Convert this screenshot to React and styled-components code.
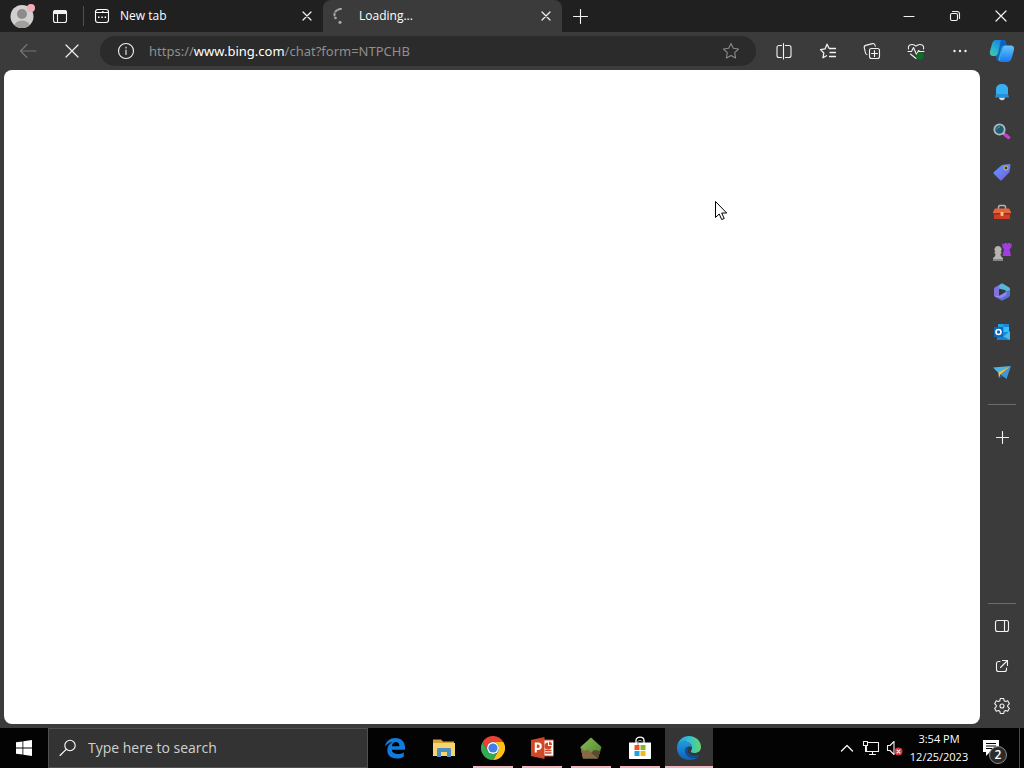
import { useState } from "react";
import styled, { createGlobalStyle } from "styled-components";

const GlobalStyle = createGlobalStyle`
  *,
  *::before,
  *::after {
    box-sizing: border-box;
  }

  :root {
    --frame: #3b3b3b;
    --titlebar: #202020;
    --field: #2b2b2b;
    --accent: #f0b4bc;
    --ui-font: "Open Sans", "Noto Sans", sans-serif;
  }

  body {
    margin: 0;
    font-family: var(--ui-font);
    color: #fff;
    background-color: var(--frame);
  }

  button,
  input {
    font-family: inherit;
  }
`;

export default function App() {
  return (
    <>
      <GlobalStyle />
      <Desktop>
        <TitleBar />
        <Toolbar />
        <Browser>
          <WebPage>
            <Cursor />
          </WebPage>
          <Sidebar />
        </Browser>
        <Taskbar />
      </Desktop>
    </>
  );
}

function TitleBar() {
  return (
    <TitleBarRow>
      <IconButton $width="44px" aria-label="Profile">
        <ProfileIcon />
      </IconButton>
      <IconButton $width="32px" aria-label="Tab actions menu">
        <TabActionsIcon />
      </IconButton>
      <TitleDivider />
      <Tab>
        <NewTabIcon />
        <TabTitle>New tab</TabTitle>
        <CloseTab aria-label="Close New tab">
          <CrossIcon size={10} />
        </CloseTab>
      </Tab>
      <Tab $active>
        <SpinnerIcon />
        <TabTitle>Loading...</TabTitle>
        <CloseTab aria-label="Close Loading">
          <CrossIcon size={10} />
        </CloseTab>
      </Tab>
      <IconButton $width="36px" aria-label="New tab">
        <PlusIcon size={15} />
      </IconButton>
      <WindowControls>
        <IconButton $width="46px" aria-label="Minimize">
          <Line width="12" height="12" viewBox="0 0 12 12">
            <path d="M1 6.500h10" />
          </Line>
        </IconButton>
        <IconButton $width="46px" aria-label="Restore">
          <Line width="12" height="12" viewBox="0 0 12 12">
            <rect x="1.500" y="3.500" width="7" height="7" rx="1.500" />
            <path d="M3.500 1.500h4.500a2.500 2.500 0 0 1 2.500 2.500v4.500" />
          </Line>
        </IconButton>
        <IconButton $width="46px" aria-label="Close window">
          <CrossIcon size={12} />
        </IconButton>
      </WindowControls>
    </TitleBarRow>
  );
}

function Toolbar() {
  return (
    <ToolbarRow>
      <NavButtons>
        <IconButton $width="44px" $color="#757575" aria-label="Back">
          <Line width="18" height="16" viewBox="0 0 18 16">
            <path d="M17 8H1.500M8 1.500 1.500 8 8 14.500" />
          </Line>
        </IconButton>
        <IconButton $width="44px" aria-label="Stop loading">
          <CrossIcon size={14} />
        </IconButton>
      </NavButtons>
      <AddressBar />
      <ToolbarActions>
        <IconButton $width="44px" aria-label="Split screen">
          <Line width="18" height="18" viewBox="0 0 18 18">
            <path d="M6.500 3.500H4a2 2 0 0 0-2 2v8a2 2 0 0 0 2 2h2.500M10.500 3.500H14a2 2 0 0 1 2 2v8a2 2 0 0 1-2 2h-3.500M8.500 1.500v15.500" />
          </Line>
        </IconButton>
        <IconButton $width="44px" aria-label="Favorites">
          <Line width="18" height="18" viewBox="0 0 18 18" $weight="1.3">
            <path d="M7.500 13.700 4 15.800l.8-4.800L1.500 7.600l4.500-.7 2-4.700 2.200 4.300h6.300M11 10.500h5.500M10.500 14.500h6" />
          </Line>
        </IconButton>
        <IconButton $width="44px" aria-label="Collections">
          <Line width="18" height="18" viewBox="0 0 18 18">
            <rect x="6.500" y="6.500" width="10" height="10" rx="2" />
            <path d="M11.500 8.500v6M8.500 11.500h6M4 12.500a2 2 0 0 1-1.500-1.500L1.300 5.800a2 2 0 0 1 1.400-2.400l6.800-1.800a2 2 0 0 1 2.400 1.300l.4 1.300" />
          </Line>
        </IconButton>
        <IconButton $width="44px" aria-label="Browser essentials">
          <Line width="18" height="18" viewBox="0 0 18 18">
            <path d="M1.500 7C.5 3 5.500.8 9 4.200c3.500-3.400 8.500-1.200 7.500 2.800M1 9.500h3.500l2-4 3 7 2-4 1 1H17M3.500 12 9 16.500" />
            <circle cx="13" cy="14" r="3.800" fill="#0e6e24" stroke="none" />
          </Line>
        </IconButton>
        <IconButton $width="44px" aria-label="Settings and more">
          <svg width="16" height="16" viewBox="0 0 16 16" fill="currentColor">
            <circle cx="2.500" cy="8" r="1.200" />
            <circle cx="8" cy="8" r="1.200" />
            <circle cx="13.500" cy="8" r="1.200" />
          </svg>
        </IconButton>
        <IconButton $width="40px" aria-label="Copilot">
          <CopilotIcon />
        </IconButton>
      </ToolbarActions>
    </ToolbarRow>
  );
}

function AddressBar() {
  const [editing, setEditing] = useState(false);
  const [url, setUrl] = useState("https://www.bing.com/chat?form=NTPCHB");
  const [, scheme, host, path] = url.match(/^(\w+:\/\/)?([^/]*)(.*)$/);

  return (
    <AddressField>
      <InlineButton aria-label="View site information">
        <Line width="18" height="18" viewBox="0 0 18 18">
          <circle cx="9" cy="9" r="7.500" />
          <path d="M9 8v4.500M9 5v1" />
        </Line>
      </InlineButton>
      <AddressText>
        <AddressInput
          aria-label="Address and search bar"
          value={editing ? url : ""}
          onFocus={() => setEditing(true)}
          onBlur={() => setEditing(false)}
          onChange={(event) => setUrl(event.target.value)}
        />
        {!editing && (
          <FormattedUrl>
            {scheme}
            <Host>{host}</Host>
            {path}
          </FormattedUrl>
        )}
      </AddressText>
      <InlineButton $color="#8a8a8a" aria-label="Add to favorites">
        <Line width="18" height="18" viewBox="0 0 18 18">
          <path d="m9 1.500 2.300 4.800 5.200.7-3.800 3.700.9 5.300L9 13.500 4.400 16l.9-5.300L1.500 7l5.200-.7z" />
        </Line>
      </InlineButton>
    </AddressField>
  );
}

const sidebarApps = [
  { label: "Notifications", Icon: BellIcon },
  { label: "Search", Icon: MagnifierIcon },
  { label: "Shopping", Icon: TagIcon },
  { label: "Tools", Icon: ToolboxIcon },
  { label: "Games", Icon: ChessIcon },
  { label: "Microsoft 365", Icon: OfficeIcon },
  { label: "Outlook", Icon: OutlookIcon },
  { label: "Drop", Icon: DropIcon },
];

function Sidebar() {
  return (
    <SidebarColumn>
      {sidebarApps.map(({ label, Icon }) => (
        <SidebarButton key={label} aria-label={label}>
          <Icon />
        </SidebarButton>
      ))}
      <SidebarDivider $space="12px" />
      <SidebarButton aria-label="Customize sidebar">
        <PlusIcon size={13} />
      </SidebarButton>
      <SidebarFooter>
        <SidebarDivider $space="2px" />
        <SidebarButton aria-label="Hide sidebar">
          <Line width="16" height="16" viewBox="0 0 16 16">
            <rect x="1.500" y="2.500" width="13" height="11" rx="2" />
            <path d="M10.500 2.500v11" />
          </Line>
        </SidebarButton>
        <SidebarButton aria-label="Open link externally">
          <Line width="16" height="16" viewBox="0 0 16 16">
            <path d="M6 3.500H4.500a2 2 0 0 0-2 2v6a2 2 0 0 0 2 2h6a2 2 0 0 0 2-2V10M8.500 2.500h5v5M13.500 2.500 6.500 9.500" />
          </Line>
        </SidebarButton>
        <SidebarButton aria-label="Settings">
          <Line width="18" height="18" viewBox="0 0 18 18">
            <path d="M7.300 1.500h3.400l.5 2.300 1.300.7 2.200-.7 1.700 2.900-1.700 1.600v1.400l1.700 1.600-1.700 2.900-2.200-.7-1.300.7-.5 2.300H7.300l-.5-2.300-1.300-.7-2.200.7-1.700-2.900 1.700-1.600V8.300L1.600 6.700l1.700-2.900 2.200.7 1.300-.7z" />
            <circle cx="9" cy="9" r="2" />
          </Line>
        </SidebarButton>
      </SidebarFooter>
    </SidebarColumn>
  );
}

const taskbarApps = [
  { label: "Microsoft Edge Legacy", Icon: LegacyEdgeIcon },
  { label: "File Explorer", Icon: ExplorerIcon },
  { label: "Google Chrome", Icon: ChromeIcon, running: true },
  { label: "PowerPoint", Icon: PowerPointIcon, running: true },
  { label: "Game launcher", Icon: PentagonIcon, running: true },
  { label: "Microsoft Store", Icon: StoreIcon, running: true },
  { label: "Microsoft Edge", Icon: EdgeIcon, running: true, active: true },
];

function Taskbar() {
  return (
    <TaskbarRow>
      <IconButton $width="48px" aria-label="Start">
        <svg width="16" height="16" viewBox="0 0 16 16" fill="#fff">
          <path d="M0 2.300 6.500 1.400v6.200H0zM7.300 1.300 16 0v7.600H7.300zM0 8.400h6.500v6.200L0 13.700zM7.300 8.400H16V16l-8.700-1.300z" />
        </svg>
      </IconButton>
      <TaskbarSearch>
        <Line width="18" height="18" viewBox="0 0 18 18">
          <circle cx="11" cy="6.500" r="5.200" />
          <path d="M7.200 10.300 1 16.500" />
        </Line>
        <SearchInput
          type="text"
          aria-label="Type here to search"
          placeholder="Type here to search"
        />
      </TaskbarSearch>
      <TaskbarApps>
        {taskbarApps.map(({ label, Icon, running, active }) => (
          <TaskbarButton
            key={label}
            aria-label={label}
            $running={running}
            $active={active}
          >
            <Icon />
          </TaskbarButton>
        ))}
      </TaskbarApps>
      <Tray>
        <IconButton $width="24px" aria-label="Show hidden icons">
          <Line width="14" height="14" viewBox="0 0 14 14" $weight="1.4">
            <path d="m1.500 10 5.500-5.500 5.500 5.500" />
          </Line>
        </IconButton>
        <IconButton $width="24px" aria-label="Network">
          <Line width="18" height="16" viewBox="0 0 18 16">
            <path d="M6 2.500h10.500v9H4.500V6.500M10.500 11.500v3M7.500 14.500h6" />
            <path d="M1.500 1.500h4v4h-4zM3.500 5.500v6" />
          </Line>
        </IconButton>
        <IconButton $width="24px" aria-label="Volume, muted">
          <Line width="18" height="16" viewBox="0 0 18 16">
            <path d="M1.500 5.500H4l4-4v13l-4-4H1.500z" />
            <circle cx="12.500" cy="11.500" r="4" fill="#d13440" stroke="none" />
            <path d="m11 10 3 3M14 10l-3 3" />
          </Line>
        </IconButton>
        <Clock>
          <span>3:54 PM</span>
          <span>12/25/2023</span>
        </Clock>
        <NotificationButton aria-label="2 new notifications">
          <svg width="18" height="18" viewBox="0 0 18 18">
            <path d="M1 1h16v12H8l-4 4v-4H1z" fill="#fff" />
            <path d="M4 4.500h10M4 7h10M4 9.500h6" stroke="#000" />
          </svg>
          <Badge>2</Badge>
        </NotificationButton>
        <ShowDesktop aria-label="Show desktop" />
      </Tray>
    </TaskbarRow>
  );
}

function CrossIcon({ size }) {
  return (
    <Line width={size} height={size} viewBox={`0 0 ${size} ${size}`} $weight="1.2">
      <path d={`M1 1 ${size - 1} ${size - 1}M${size - 1} 1 1 ${size - 1}`} />
    </Line>
  );
}

function PlusIcon({ size }) {
  const middle = size / 2;
  return (
    <Line width={size} height={size} viewBox={`0 0 ${size} ${size}`}>
      <path d={`M${middle} 0.500v${size - 1}M0.500 ${middle}h${size - 1}`} />
    </Line>
  );
}

function ProfileIcon() {
  return (
    <svg width="26" height="26" viewBox="0 0 26 26">
      <defs>
        <clipPath id="face">
          <circle cx="13" cy="13.500" r="11.500" />
        </clipPath>
      </defs>
      <g clipPath="url(#face)">
        <path d="M0 0h26v26H0z" fill="#d2d0ce" />
        <ellipse cx="13" cy="23.500" rx="8" ry="6" fill="#a19f9d" />
        <circle cx="13" cy="11" r="6" fill="#d2d0ce" />
        <circle cx="13" cy="11" r="5" fill="#8e8c8a" />
      </g>
      <circle cx="22" cy="5" r="4" fill="#f4acb8" />
    </svg>
  );
}

function TabActionsIcon() {
  return (
    <Line width="16" height="16" viewBox="0 0 16 16">
      <rect x="1.500" y="2.500" width="13" height="12" rx="2" />
      <path d="M5.500 5v9.500" />
      <path d="M1.500 5.500v-1a2 2 0 0 1 2-2h9a2 2 0 0 1 2 2v1z" fill="currentColor" />
    </Line>
  );
}

function NewTabIcon() {
  return (
    <Line width="16" height="16" viewBox="0 0 16 16">
      <rect x="1.500" y="1.500" width="13" height="13" rx="2.500" />
      <path d="M1.500 4.500H8l1-1M9 4.500h5.500" />
      <path d="M4 8.500h1.500v1.500H4zM7.300 8.500h1.500v1.500H7.300zM10.600 8.500h1.500v1.500h-1.500z" fill="currentColor" stroke="none" />
    </Line>
  );
}

function SpinnerIcon() {
  return (
    <svg width="16" height="16" viewBox="0 0 16 16" fill="#a6a6a6">
      <path d="M5.500 1.500 8 .8M2.500 3.500 4 2.300M1.500 5.500v2" fill="none" stroke="#a6a6a6" strokeWidth="2" strokeLinecap="round" />
      <circle cx="2.500" cy="10" r="1.300" />
      <circle cx="7" cy="14.300" r="1.600" />
    </svg>
  );
}

function CopilotIcon() {
  return (
    <svg width="26" height="24" viewBox="0 0 26 24">
      <defs>
        <linearGradient id="copilotLeft" x1="0" y1="1" x2="0.600" y2="0">
          <stop offset="0" stopColor="#5ec98a" />
          <stop offset="0.500" stopColor="#2cb8c8" />
          <stop offset="1" stopColor="#1583e0" />
        </linearGradient>
        <linearGradient id="copilotRight" x1="0" y1="0" x2="0" y2="1">
          <stop offset="0" stopColor="#62c6ff" />
          <stop offset="1" stopColor="#1678f0" />
        </linearGradient>
      </defs>
      <path d="M7 1h7c2.500 0 3 1.500 3.500 5.500l-6 16C8 22 8.500 17 6.500 17H4c-3 0-3.500-2.500-3-5L3 5c.7-2.800 2-4 4-4z" fill="url(#copilotLeft)" />
      <path d="M12 1h2c2.500 0 3 1.500 3.500 5.500h-2c-3 0-3 1.500-3.500 4l-3 12c-2-.5-1.500-4-2.500-5.500 1.500-1 2.500-2 3-5z" fill="#1059ba" opacity="0.850" />
      <path d="M17 6.500h4.500c3.500 0 4 2.500 3.300 5L23 18c-.8 3.500-2.200 5-5 5h-5.500c-2 0-2.500-1-1.500-4l2.500-9c.7-2.500 1.500-3.500 3.500-3.500z" fill="url(#copilotRight)" />
    </svg>
  );
}

function BellIcon() {
  return (
    <svg width="18" height="18" viewBox="0 0 18 18">
      <path d="M6 14.500h6c0 3.500-6 3.500-6 0z" fill="#e5dfd2" />
      <path d="M9 1c4 0 6 2.500 6 6v4l1 3.500H2L3 11V7c0-3.500 2-6 6-6z" fill="#2490e0" />
      <path d="M9 1c4 0 6 2.500 6 6v4H3V7c0-3.500 2-6 6-6z" fill="#37aeee" />
    </svg>
  );
}

function MagnifierIcon() {
  return (
    <svg width="18" height="18" viewBox="0 0 18 18" fill="none">
      <path d="m10 10 2 2" stroke="#b9b9c9" strokeWidth="2" />
      <path d="m12.500 12 3 2.500" stroke="#c43fd0" strokeWidth="3.500" strokeLinecap="round" />
      <circle cx="6.500" cy="6.500" r="5.200" fill="#245d72" stroke="#a9bdc4" strokeWidth="1.800" />
      <path d="M4 6.500a2.500 2.500 0 0 1 3-2.500" stroke="#43afb7" />
    </svg>
  );
}

function TagIcon() {
  return (
    <svg width="18" height="18" viewBox="0 0 18 18">
      <defs>
        <linearGradient id="tag" x1="0" y1="0" x2="1" y2="1">
          <stop offset="0" stopColor="#60a0fc" />
          <stop offset="1" stopColor="#7359e4" />
        </linearGradient>
      </defs>
      <path d="m9 2 7-1c1 0 1.500.5 1.500 1.500L16.500 9 9 17c-.7.7-1.500.7-2 0L1 11c-.7-.7-.7-1.500 0-2z" fill="url(#tag)" />
      <circle cx="13" cy="5" r="2" fill="#263b55" stroke="#e1cb50" />
    </svg>
  );
}

function ToolboxIcon() {
  return (
    <svg width="18" height="18" viewBox="0 0 18 18">
      <path d="M5.500 6V4.500c0-1 .5-2 1.500-2h4c1 0 1.500 1 1.500 2V6" fill="none" stroke="#b7b3b0" strokeWidth="1.500" />
      <path d="M2 5.500h14l2 3.500v2H0V9z" fill="#e8643a" />
      <path d="M1 11h16v4c0 .7-.3 1-1 1H2c-.7 0-1-.3-1-1z" fill="#ce3d25" />
      <path d="M0 10h18v1.500H0z" fill="#9e2a22" />
      <path d="M7.500 9h3v3c0 1.500-3 1.500-3 0z" fill="#f6c478" />
    </svg>
  );
}

function ChessIcon() {
  return (
    <svg width="20" height="20" viewBox="0 0 20 20">
      <path d="m10 1 2 1.500L12.500 1h2.300l.5 1.500L16 1h2l.5 1.500L20 1l-.8 5-1.700 1 1.500 7h-8.500l1.500-7-1.300-1z" fill="#a23ee0" />
      <path d="M6 4a3.500 3.500 0 0 1 2.500 6h1v1.500H8.500c0 2 .5 3.500 2.500 4.500V19H1v-3c2-1 2.500-2.500 2.500-4.500h-1V10h1A3.500 3.500 0 0 1 6 4z" fill="#b5b4b2" />
      <path d="M1 17h10v2H1z" fill="#858585" />
    </svg>
  );
}

function OfficeIcon() {
  return (
    <svg width="18" height="18" viewBox="0 0 18 18">
      <path d="M8 .7 2.500 4C1.300 4.700 1 5.500 1 6.500v5c0 1 .5 2 1.500 2.500L6 14.500V6l5-4z" fill="#8271df" />
      <path d="M8 .7c.7-.4 1.500-.4 2 0L15.500 4c1 .6 1.500 1.500 1.500 2.500V11l-4.500-2.500V7L6 6V3.500z" fill="#55b8d8" />
      <path d="M17 7v5c0 1-.5 1.800-1.500 2.300L10 17.300c-.7.4-1.500.4-2 0L2.500 14C5 14.500 7 12 12.500 8.500z" fill="#5a6fd8" />
      <path d="M1 12c2.500 2 5 1 8-.7l4.500-2.600V12L8.500 15l-6-1z" fill="#a493f0" opacity="0.700" />
      <path d="m6.500 5.500 6 3.300-6 3.700z" fill="#343540" />
    </svg>
  );
}

function OutlookIcon() {
  return (
    <svg width="18" height="18" viewBox="0 0 18 18">
      <path d="M5 1h11v15H5z" fill="#1689dc" />
      <path d="M5 1h5.500v5H5z" fill="#22a0e6" />
      <path d="M10.500 4H16v5h-5.500z" fill="#39bdf5" />
      <path d="m4 10 7 3 6-5v9H5c-.7 0-1-.3-1-1z" fill="#42bdec" />
      <path d="m4 10 13 7H5c-.7 0-1-.3-1-1z" fill="#1880cf" />
      <path d="M1 4h9v10H1z" fill="#0868ba" />
      <circle cx="5.500" cy="9" r="2.500" fill="none" stroke="#fff" strokeWidth="1.500" />
    </svg>
  );
}

function DropIcon() {
  return (
    <svg width="18" height="18" viewBox="0 0 18 18">
      <path d="M0 4.500 18 3 5.500 10z" fill="#4fb3e8" />
      <path d="m18 3-4.500 13L7.500 11.500z" fill="#3c98dc" />
      <path d="M5.300 9.500 18 3 7.500 11.500 6 15.500z" fill="#efc63e" />
      <path d="m6 15.500 1.500-4 2.500 1.700z" fill="#1c5f9f" />
    </svg>
  );
}

function LegacyEdgeIcon() {
  return (
    <svg width="22" height="22" viewBox="0 0 22 22">
      <path d="M1 9.500C2 4 6 1 11.500 1 17.500 1 21 5 21 10.500v2.300H7.800c.3 3 2.700 4.300 5.700 4.300 2.500 0 4.500-.6 6.300-1.700v4.300C17.700 21 15.300 21.500 12.500 21.500 7 21.500 3.300 18.300 3.300 13.300c0-3.500 1.700-6.300 5-8C5.300 5.300 3 7 1 9.500zM7.900 9.300h7.500c0-2.800-1.300-4.200-3.700-4.200-2.200 0-3.500 1.700-3.800 4.200z" fill="#0f7ce0" />
    </svg>
  );
}

function ExplorerIcon() {
  return (
    <svg width="22" height="20" viewBox="0 0 22 20">
      <path d="M0 1.500h8l2 2h11v4H0z" fill="#d9a036" />
      <path d="M0 5h22v13H0z" fill="#f7d56c" />
      <path d="M4 11.500c0-1 .5-1.500 1.500-1.500h11c1 0 1.500.5 1.500 1.500V19h-4v-5H8v5H4z" fill="#4b8fc4" />
    </svg>
  );
}

function ChromeIcon() {
  return (
    <svg width="24" height="24" viewBox="0 0 24 24">
      <path d="M1.600 6A12 12 0 0 1 22.400 6H12a6 6 0 0 0-5.200 9z" fill="#ea4335" />
      <path d="M22.400 6A12 12 0 0 1 12 24l5.200-9A6 6 0 0 0 12 6z" fill="#fbc116" />
      <path d="M12 24A12 12 0 0 1 1.600 6l5.200 9a6 6 0 0 0 10.400 0z" fill="#34a853" />
      <circle cx="12" cy="12" r="6" fill="#fff" />
      <circle cx="12" cy="12" r="4.600" fill="#3e7fea" />
    </svg>
  );
}

function PowerPointIcon() {
  return (
    <svg width="23" height="22" viewBox="0 0 23 22">
      <path d="M12 3h10.500v16H12z" fill="#fff" stroke="#d24726" />
      <path d="M14 13.500h6.500M14 16h6.500" stroke="#d24726" strokeWidth="1.500" />
      <path d="M17 5.500V9h3.500a3.500 3.500 0 1 1-3.500-3.500z" fill="#d24726" />
      <path d="M18 4.500A3.500 3.500 0 0 1 21 8h-3z" fill="#d24726" />
      <path d="M0 3 13.500 0v22L0 19z" fill="#d24726" />
      <path d="M4.800 15.500v-9h2.200c3.700 0 3.700 5.500 0 5.500H4.800" fill="none" stroke="#fff" strokeWidth="2" />
    </svg>
  );
}

function PentagonIcon() {
  return (
    <svg width="24" height="24" viewBox="0 0 24 24">
      <defs>
        <linearGradient id="grass" x1="0" y1="0" x2="1" y2="1">
          <stop offset="0" stopColor="#86c052" />
          <stop offset="1" stopColor="#4f7d30" />
        </linearGradient>
      </defs>
      <path d="M12 1.500 22.500 11 19 22.500H4L1.500 11z" fill="url(#grass)" />
      <path d="M1.500 11 5 15l4-1.500 3 3.500 7 5.500H4z" fill="#8a6748" />
      <path d="m12 17 3-3 6.300 1L19 22.500z" fill="#5b4a2e" />
    </svg>
  );
}

function StoreIcon() {
  return (
    <svg width="24" height="24" viewBox="0 0 24 24">
      <path d="M8 8V4.500C8 0 16 0 16 4.500V8" fill="none" stroke="#fff" strokeWidth="1.300" />
      <path d="M1 6.500h22V22c0 .7-.3 1-1 1H2c-.7 0-1-.3-1-1z" fill="#fff" />
      <path d="M10 9V5.500c0-1.500 4-1.500 4 0" fill="none" stroke="#999" />
      <path d="M6.500 9h5v5h-5z" fill="#f05125" />
      <path d="M12.500 9h5v5h-5z" fill="#80b929" />
      <path d="M6.500 15h5v5h-5z" fill="#1da3e7" />
      <path d="M12.500 15h5v5h-5z" fill="#f6b719" />
    </svg>
  );
}

function EdgeIcon() {
  return (
    <svg width="24" height="24" viewBox="0 0 24 24">
      <defs>
        <linearGradient id="edgeTop" x1="0" y1="0.500" x2="1" y2="0.500">
          <stop offset="0" stopColor="#2799e0" />
          <stop offset="0.500" stopColor="#32c1d3" />
          <stop offset="1" stopColor="#62d66b" />
        </linearGradient>
        <linearGradient id="edgeLeft" x1="0" y1="0" x2="0" y2="1">
          <stop offset="0" stopColor="#2399dd" />
          <stop offset="1" stopColor="#0c5fbc" />
        </linearGradient>
      </defs>
      <path d="M0 12c0-5 3.500-6.500 7.500-6.500 4.500 0 7 3 7 6-1.500-1.700-6-1.500-6 3.500 0 4 3.500 7 8 7 2 0 3.500-.5 5-1.500-2 2.500-5.500 3.500-9.500 3.500C5 24 0 18.500 0 12z" fill="url(#edgeLeft)" />
      <path d="M8.500 12.500c-1.500 5 2 9.500 8 9.500 2 0 4-.8 5.500-2.500.4-.5 0-1-.6-.7-5 2-10.400-.3-10.400-4.300 0-1 .3-2 1-3-1.500-.5-3-.3-3.500 1z" fill="#144b91" />
      <path d="M.2 10C1.200 4 6 0 12 0c7 0 12 5 12 11 0 3.800-2.800 6-6.500 6-3 0-4-1-3.500-2 .4-.8 1-1.500 1-3.200C15 8 11.500 5.500 7.500 5.500 4 5.500 1.200 7 .2 10z" fill="url(#edgeTop)" />
    </svg>
  );
}

function Cursor() {
  return (
    <Pointer width="14" height="21" viewBox="0 0 14 21" aria-hidden="true">
      <path d="M1.500 1.500v16l3.700-3.500 2.500 5.500 2.500-1-2.500-5.500h5z" fill="#fff" stroke="#000" />
    </Pointer>
  );
}

const Line = styled.svg`
  flex: none;
  fill: none;
  stroke: currentColor;
  stroke-width: ${({ $weight }) => $weight || 1.1};
  stroke-linecap: round;
  stroke-linejoin: round;
`;

const Desktop = styled.div`
  min-height: 100vh;
  display: flex;
  flex-direction: column;
  background-color: var(--frame);
`;

const PlainButton = styled.button`
  display: flex;
  flex: none;
  align-items: center;
  justify-content: center;
  padding: 0;
  border: none;
  background: none;
  color: ${({ $color }) => $color || "#f2f2f2"};
`;

const IconButton = styled(PlainButton)`
  width: ${({ $width }) => $width};
`;

const TitleBarRow = styled.header`
  display: flex;
  height: 32px;
  background-color: var(--titlebar);
`;

const TitleDivider = styled.span`
  flex: none;
  width: 1px;
  height: 20px;
  margin: 6px 0 0 7px;
  background-color: #505050;
`;

const Tab = styled.div`
  display: flex;
  flex: 0 1 239px;
  align-items: center;
  gap: 10px;
  min-width: 0;
  padding: 0 10px;
  border-radius: 8px 8px 0 0;
  background-color: ${({ $active }) =>
    $active ? "var(--frame)" : "transparent"};
`;

const TabTitle = styled.span`
  flex: 1;
  font-size: 12px;
  line-height: 16px;
  white-space: nowrap;
`;

const CloseTab = styled(PlainButton)`
  width: 12px;
  height: 20px;
`;

const WindowControls = styled.div`
  display: flex;
  margin-left: auto;
`;

const ToolbarRow = styled.nav`
  display: flex;
  align-items: center;
  height: 38px;
  padding-right: 2px;
`;

const NavButtons = styled.div`
  display: flex;
  padding: 0 6px;
`;

const AddressField = styled.div`
  display: flex;
  flex: 1;
  align-items: center;
  gap: 13px;
  height: 30px;
  padding: 0 15px 0 16px;
  border-radius: 15px;
  background-color: var(--field);
`;

const InlineButton = styled(PlainButton)`
  width: 20px;
  height: 24px;
`;

const AddressText = styled.div`
  display: grid;
  flex: 1;
  min-width: 0;
  align-items: center;
  font-family: "Noto Sans", "Open Sans", sans-serif;
  font-size: 13px;
  line-height: 20px;
  color: #8f8f8f;

  > * {
    grid-area: 1 / 1;
  }
`;

const AddressInput = styled.input`
  width: 100%;
  padding: 0;
  border: none;
  outline: none;
  background: none;
  color: #fff;
  font-size: 13px;
  line-height: 20px;
`;

const FormattedUrl = styled.span`
  overflow: hidden;
  white-space: nowrap;
  pointer-events: none;
`;

const Host = styled.span`
  color: #fff;
`;

const ToolbarActions = styled.div`
  display: flex;
  padding-left: 6px;
`;

const Browser = styled.div`
  display: flex;
  flex: 1;
`;

const WebPage = styled.main`
  position: relative;
  flex: 1;
  margin: 0 0 4px 4px;
  border-radius: 8px;
  background-color: #fff;
`;

/* the mouse pointer floats over the page */
const Pointer = styled.svg`
  position: absolute;
  top: 130px;
  left: 710px;
`;

const SidebarColumn = styled.aside`
  display: flex;
  flex: none;
  flex-direction: column;
  align-items: center;
  width: 44px;
  padding: 2px 0;
`;

const SidebarButton = styled(PlainButton)`
  width: 40px;
  height: 40px;
`;

const SidebarDivider = styled.hr`
  width: 28px;
  margin: ${({ $space }) => $space} 0;
  border: none;
  border-top: 1px solid #6c6c6c;
`;

const SidebarFooter = styled.div`
  display: flex;
  flex-direction: column;
  align-items: center;
  margin-top: auto;
`;

const TaskbarRow = styled.footer`
  display: flex;
  height: 40px;
  background-color: #030303;
`;

const TaskbarSearch = styled.label`
  display: flex;
  flex: 0 1 320px;
  align-items: center;
  gap: 11px;
  padding: 0 10px;
  border: 1px solid #505050;
  background-color: #333;
`;

const SearchInput = styled.input`
  flex: 1;
  min-width: 0;
  padding: 0;
  border: none;
  outline: none;
  background: none;
  color: #fff;
  font-size: 14px;
  line-height: 20px;

  &::placeholder {
    color: #d0d0d0;
    opacity: 1;
  }
`;

const TaskbarApps = styled.div`
  display: flex;
  gap: 1px;
  padding-left: 3px;
`;

const TaskbarButton = styled(PlainButton)`
  width: 48px;
  background-color: ${({ $active }) => ($active ? "#353535" : "transparent")};
  background-image: ${({ $running }) =>
    $running ? "linear-gradient(var(--accent), var(--accent))" : "none"};
  background-position: center bottom;
  background-repeat: no-repeat;
  background-size: ${({ $active }) => ($active ? "48px" : "40px")} 2px;
`;

const Tray = styled.div`
  display: flex;
  margin-left: auto;
`;

const Clock = styled.time`
  display: flex;
  flex-direction: column;
  align-items: center;
  justify-content: center;
  width: 64px;
  font-size: 11px;
  line-height: 18px;
`;

const NotificationButton = styled(PlainButton)`
  position: relative;
  width: 48px;
  padding-right: 8px;
`;

const Badge = styled.span`
  position: absolute;
  right: 12px;
  bottom: 4px;
  width: 18px;
  height: 18px;
  border: 1px solid #8a8a8a;
  border-radius: 50%;
  background-color: #2b2b2b;
  color: #fff;
  font-size: 12px;
  font-weight: 600;
  line-height: 16px;
  text-align: center;
`;

const ShowDesktop = styled(PlainButton)`
  width: 5px;
  border-left: 1px solid #4a4a4a;
`;
